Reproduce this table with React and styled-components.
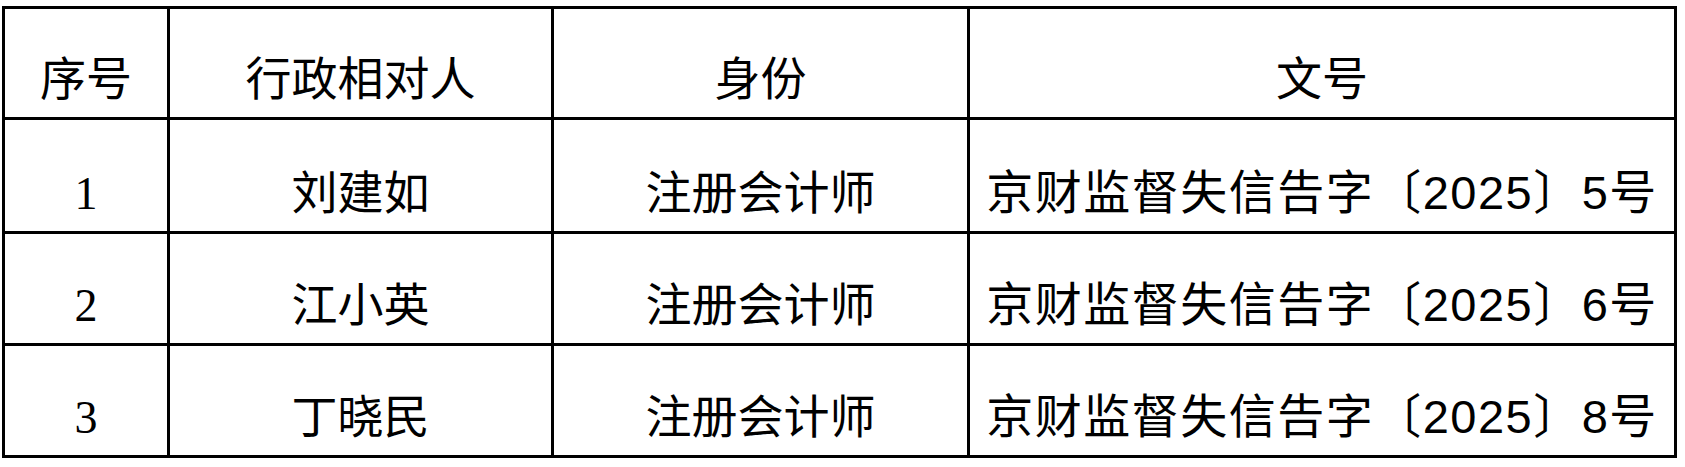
import React from "react";
import styled, { createGlobalStyle } from "styled-components";

const GlobalStyle = createGlobalStyle`
  html, body {
    margin: 0;
    padding: 0;
    background: #fff;
  }
`;

const rows = [
  { no: "1", name: "刘建如", role: "注册会计师", doc: "京财监督失信告字〔2025〕5号" },
  { no: "2", name: "江小英", role: "注册会计师", doc: "京财监督失信告字〔2025〕6号" },
  { no: "3", name: "丁晓民", role: "注册会计师", doc: "京财监督失信告字〔2025〕8号" },
];

const App = () => {
  return (
    <>
      <GlobalStyle />
      <Table>
        <Cell>序号</Cell>
        <Cell>行政相对人</Cell>
        <Cell>身份</Cell>
        <Cell>文号</Cell>
        {rows.map((row) => (
          <React.Fragment key={row.no}>
            <Cell $kind="num">{row.no}</Cell>
            <Cell>{row.name}</Cell>
            <Cell>{row.role}</Cell>
            <Cell $kind="doc">{row.doc}</Cell>
          </React.Fragment>
        ))}
      </Table>
    </>
  );
};

const fonts = {
  num: `"Liberation Serif", "Times New Roman", serif`,
  doc: `"Liberation Sans", "Noto Sans CJK SC", sans-serif`,
  text: `"Liberation Serif", "Noto Sans CJK SC", serif`,
};

const Table = styled.div`
  display: grid;
  grid-template-columns: 162px 381px 413px 704px;
  grid-template-rows: 108px 111px 109px 109px;
  gap: 3px;
  padding: 3px;
  width: max-content;
  margin: 6px 0 0 2px;
  background: #000;
`;

const Cell = styled.div`
  display: flex;
  align-items: flex-end;
  justify-content: center;
  padding-bottom: ${(p) => (p.$kind === "doc" ? "15px" : "14px")};
  background: #fff;
  color: #000;
  font-family: ${(p) => fonts[p.$kind] || fonts.text};
  font-size: ${(p) =>
    p.$kind === "num" ? "46px" : p.$kind === "doc" ? "47px" : "46px"};
  letter-spacing: ${(p) => (p.$kind === "doc" ? "1.5px" : "0")};
  font-weight: 400;
  line-height: 1;
  white-space: nowrap;
`;

export default App;
